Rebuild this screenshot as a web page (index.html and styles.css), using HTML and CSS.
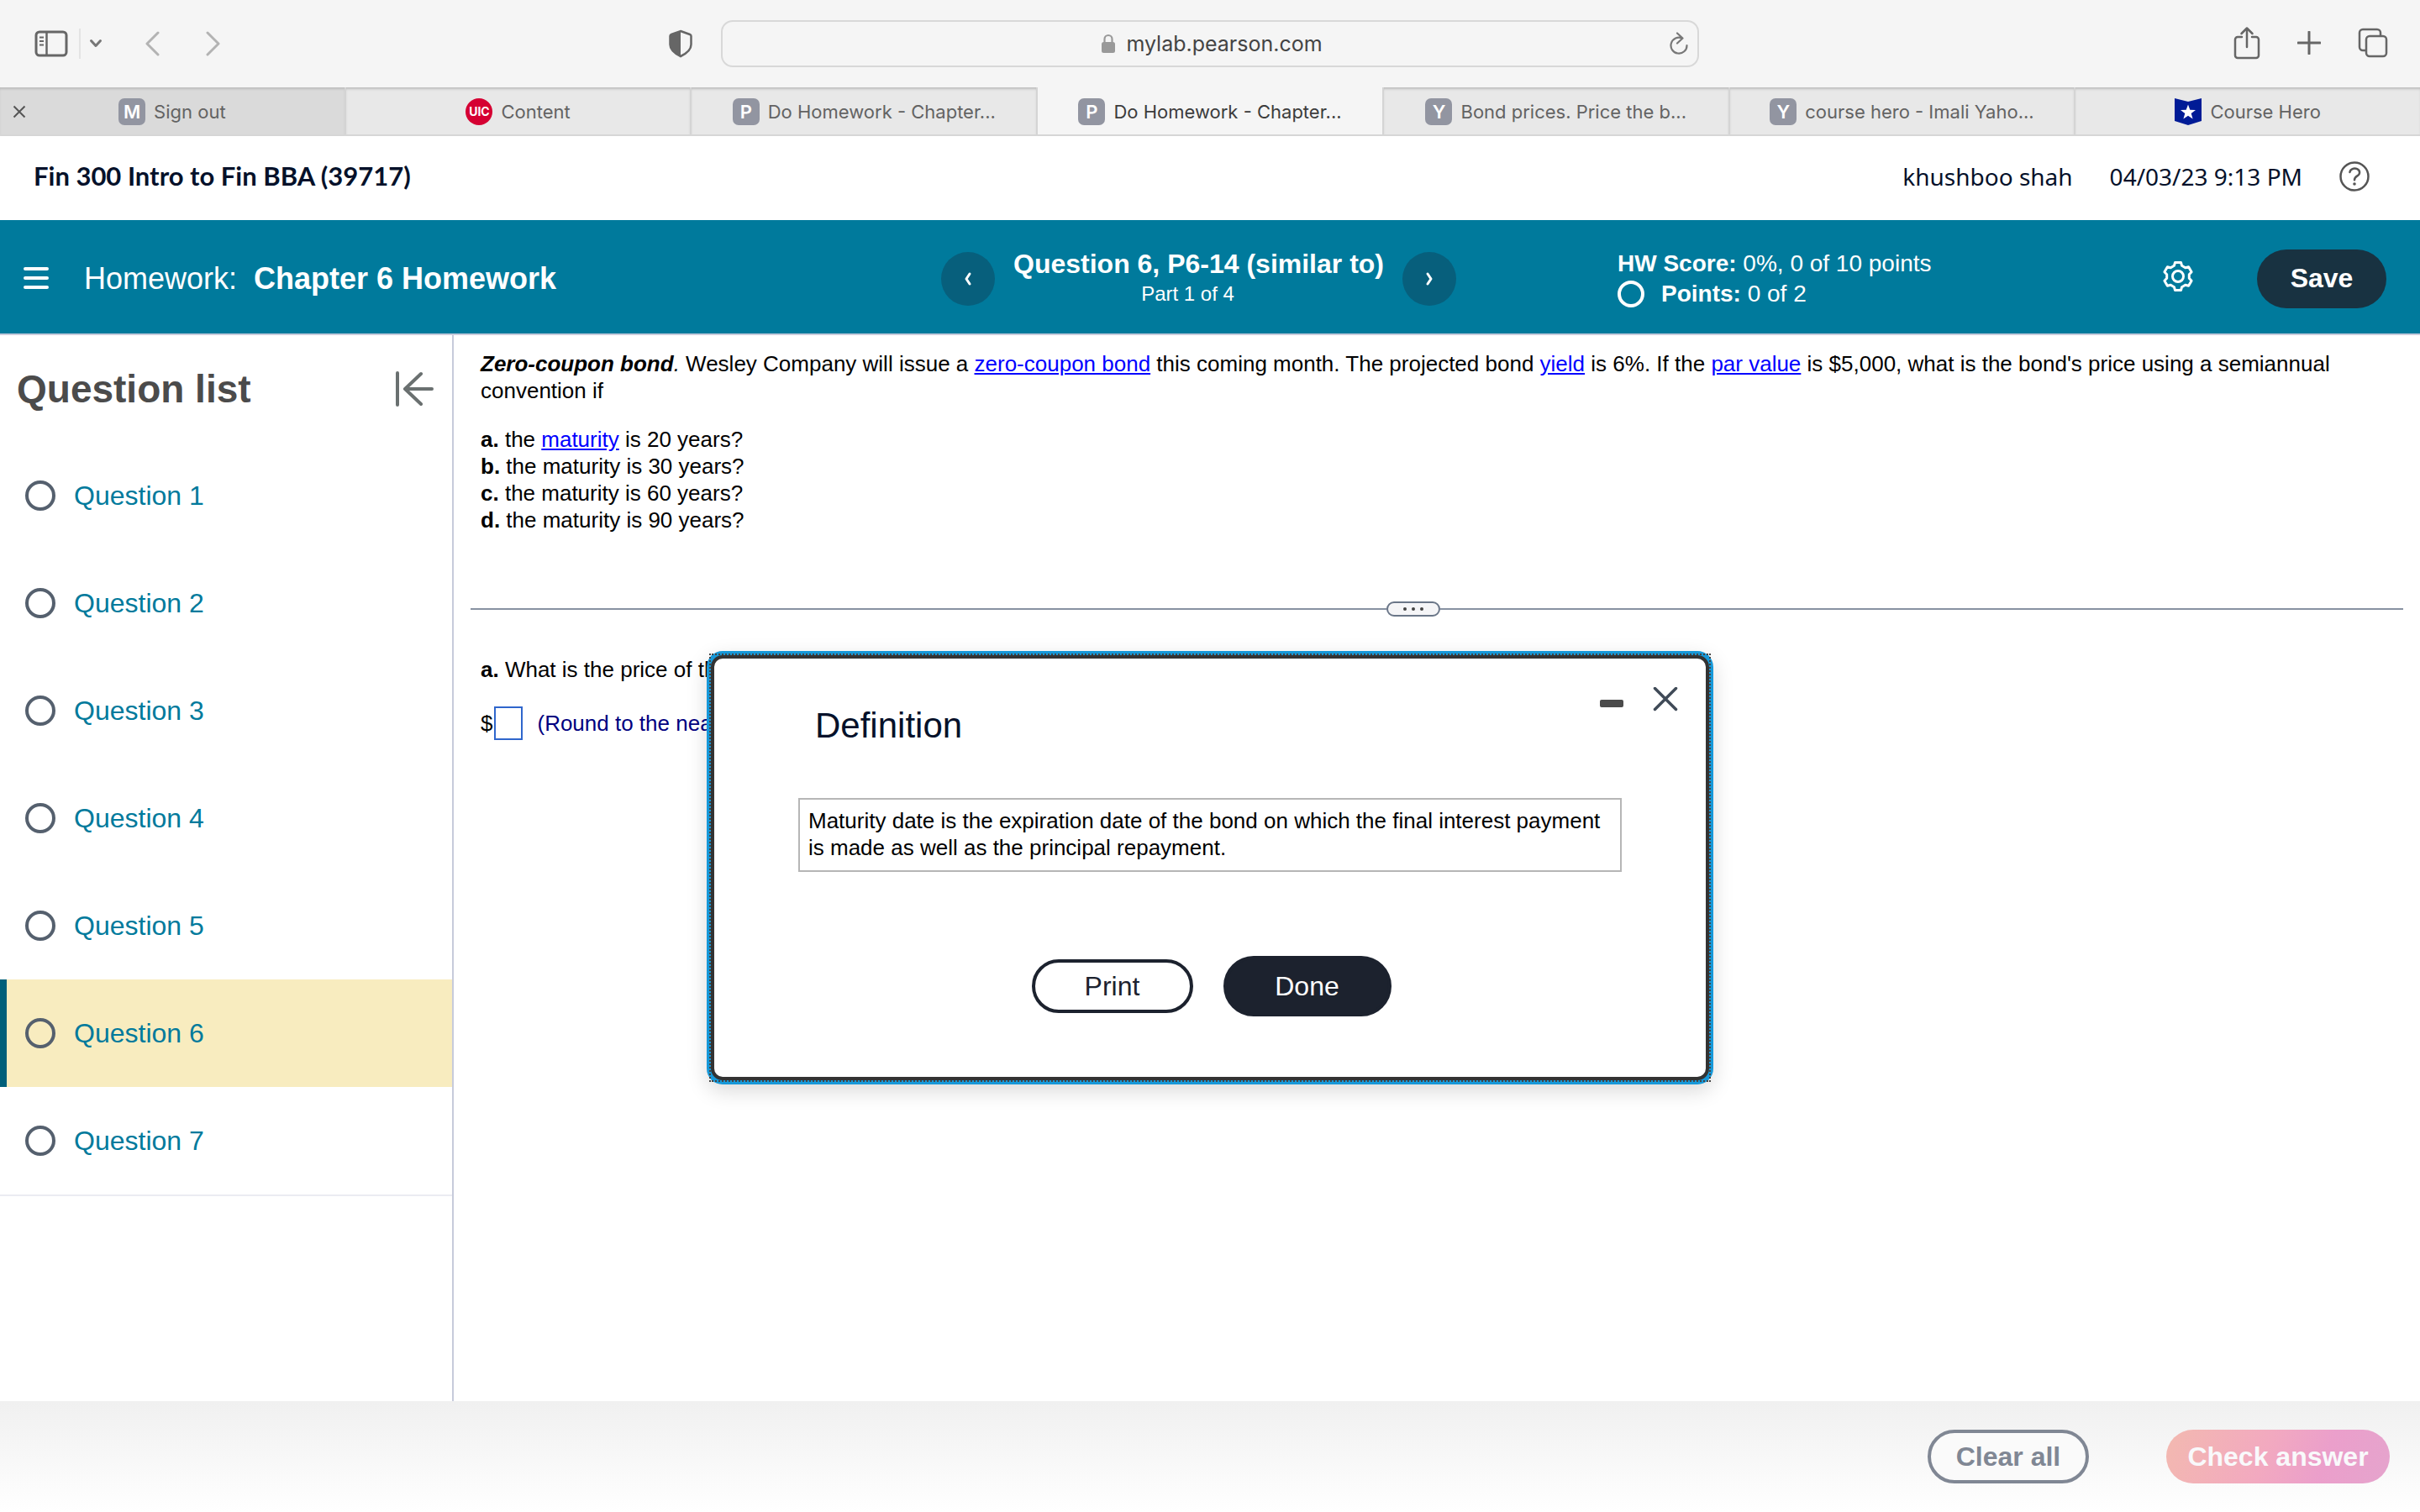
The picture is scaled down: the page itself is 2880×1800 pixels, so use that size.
FILE: index.html
```html
<!DOCTYPE html>
<html lang="en">
<head>
<meta charset="utf-8">
<title>Do Homework - Chapter 6 Homework</title>
<link rel="stylesheet" href="styles.css">
</head>
<body>
<div class="toolbar">
  <div class="tools tools-left">
    <button class="icon-btn" aria-label="Show sidebar"><svg width="40" height="32" viewBox="0 0 40 32"><rect x="2" y="2" width="36" height="28" rx="4" fill="none" stroke="#666" stroke-width="3"/><path d="M14.500 2v28" stroke="#666" stroke-width="2.500"/><path d="M6 8.500h5M6 13h5M6 17.500h5" stroke="#666" stroke-width="2"/></svg></button>
    <span class="tool-sep"></span>
    <button class="icon-btn chevron" aria-label="Tab groups"><svg width="16" height="12" viewBox="0 0 16 12"><path d="M2.500 2.500L8 8.500l5.500-6" fill="none" stroke="#777" stroke-width="3" stroke-linecap="round" stroke-linejoin="round"/></svg></button>
    <button class="icon-btn back" aria-label="Back"><svg width="20" height="30" viewBox="0 0 20 30"><path d="M16 2L3 15l13 13" fill="none" stroke="#b3b3b3" stroke-width="3" stroke-linecap="round" stroke-linejoin="round"/></svg></button>
    <button class="icon-btn forward" aria-label="Forward"><svg width="20" height="30" viewBox="0 0 20 30"><path d="M3 2l13 13L3 28" fill="none" stroke="#b3b3b3" stroke-width="3" stroke-linecap="round" stroke-linejoin="round"/></svg></button>
    <button class="icon-btn shield" aria-label="Privacy report"><svg width="28" height="34" viewBox="0 0 28 34"><path d="M14 2l11 4q1.500.6 1.500 2v10q0 8-12.500 14Q1.500 26 1.500 18V8q0-1.400 1.500-2z" fill="none" stroke="#666" stroke-width="2.500"/><path d="M14 1.500L3 6q-1.500.6-1.500 2v10q0 8 12.500 14.500z" fill="#666"/></svg></button>
  </div>
  <div class="address">
    <svg class="lock" width="18" height="24" viewBox="0 0 18 24"><path d="M4.500 11V6.500a4.500 4.500 0 0 1 9 0V11" fill="none" stroke="#999" stroke-width="2.200"/><rect x="1" y="10" width="16" height="13" rx="2.500" fill="#999"/></svg>
    <span>mylab.pearson.com</span>
    <button class="icon-btn reload" aria-label="Reload"><svg width="24" height="28" viewBox="0 0 24 28"><path d="M16 7.500A9.500 9.500 0 1 0 21.500 16M10 1.500l6.500 6-6.500 6" fill="none" stroke="#777" stroke-width="2.200" stroke-linecap="round" stroke-linejoin="round"/></svg></button>
  </div>
  <div class="tools tools-right">
    <button class="icon-btn" aria-label="Share"><svg width="32" height="40" viewBox="0 0 32 40"><path d="M10 13H5a3 3 0 0 0-3 3v19a3 3 0 0 0 3 3h22a3 3 0 0 0 3-3V16a3 3 0 0 0-3-3h-5M16 25V3M9.500 9L16 2.500 22.500 9" fill="none" stroke="#666" stroke-width="2.500" stroke-linecap="round" stroke-linejoin="round"/></svg></button>
    <button class="icon-btn" aria-label="New tab"><svg width="28" height="28" viewBox="0 0 28 28"><path d="M14 1v26M1 14h26" stroke="#666" stroke-width="3" stroke-linecap="round"/></svg></button>
    <button class="icon-btn" aria-label="Tab overview"><svg width="36" height="36" viewBox="0 0 36 36"><rect x="10" y="10" width="24" height="24" rx="4" fill="none" stroke="#666" stroke-width="2.500"/><path d="M10 27H6a4 4 0 0 1-4-4V6a4 4 0 0 1 4-4h17a4 4 0 0 1 4 4v4" fill="none" stroke="#666" stroke-width="2.500"/></svg></button>
  </div>
</div>

<nav class="tabs" aria-label="Open tabs">
  <div class="tab tab-hover"><button class="icon-btn tab-close" aria-label="Close tab"><svg width="16" height="16" viewBox="0 0 16 16"><path d="M1.500 1.500l13 13M14.500 1.500l-13 13" stroke="#555" stroke-width="2"/></svg></button><span class="fav">M</span><span>Sign out</span></div>
  <div class="tab"><span class="fav fav-uic">UIC</span><span>Content</span></div>
  <div class="tab"><span class="fav">P</span><span>Do Homework - Chapter...</span></div>
  <div class="tab tab-current"><span class="fav">P</span><span>Do Homework - Chapter...</span></div>
  <div class="tab"><span class="fav">Y</span><span>Bond prices. Price the b...</span></div>
  <div class="tab"><span class="fav">Y</span><span>course hero - Imali Yaho...</span></div>
  <div class="tab"><svg width="32" height="32" viewBox="0 0 32 32"><path d="M0 0l16 4 16-4v27l-16 5-16-5z" fill="#001b96"/><path d="M16 7.500l2.300 6.300 6.700.2-5.300 4.100 1.900 6.400-5.600-3.800-5.600 3.800 1.900-6.400L7 14l6.700-.2z" fill="#fff"/></svg><span>Course Hero</span></div>
</nav>

<header class="course">
  <h1 class="course-name">Fin 300 Intro to Fin BBA (39717)</h1>
  <div class="course-user"><span>khushboo shah</span><span>04/03/23 9:13 PM</span>
    <button class="icon-btn" aria-label="Help"><svg width="36" height="36" viewBox="0 0 36 36"><circle cx="18" cy="18" r="16.500" fill="none" stroke="#555" stroke-width="2.500"/><path d="M12.500 13a5.800 4.800 0 1 1 9 4.300c-2 1.300-3.500 2.200-3.500 4.900" fill="none" stroke="#555" stroke-width="2.500" stroke-linecap="round"/><circle cx="18" cy="27" r="1.800" fill="#555"/></svg></button>
  </div>
</header>

<div class="banner">
  <div class="banner-title">
    <button class="icon-btn" aria-label="Menu"><svg width="30" height="28" viewBox="0 0 30 28"><path d="M2 2h26M2 13h26M2 24h26" stroke="#fff" stroke-width="4" stroke-linecap="round"/></svg></button>
    <p class="hw-name">Homework:<b>Chapter 6 Homework</b></p>
  </div>
  <div class="pager">
    <button class="round" aria-label="Previous question"><svg width="12" height="18" viewBox="0 0 12 18"><path d="M8 3L4 9l4 6" fill="none" stroke="#fff" stroke-width="3" stroke-linecap="round" stroke-linejoin="round"/></svg></button>
    <div class="pager-text"><h2 class="pager-title">Question 6, P6-14 (similar to)</h2><p class="pager-part">Part 1 of 4</p></div>
    <button class="round" aria-label="Next question"><svg width="12" height="18" viewBox="0 0 12 18"><path d="M4 3l4 6-4 6" fill="none" stroke="#fff" stroke-width="3" stroke-linecap="round" stroke-linejoin="round"/></svg></button>
  </div>
  <div class="score">
    <p><b>HW Score:</b> 0%, 0 of 10 points</p>
    <p class="points"><span class="ring"></span><span><b>Points:</b> 0 of 2</span></p>
  </div>
  <div class="banner-actions">
    <button class="icon-btn settings" aria-label="Settings"><svg width="36" height="36" viewBox="-18 -18 36 36" fill="none" stroke="#fff" stroke-width="3" stroke-linejoin="round"><circle r="6.500"/><path d="M-3.500-16.500L3.500-16.500 4.600-12.700 8.700-10.300 12.600-11.300 16.100-5.200 13.300-2.300 13.300 2.300 16.100 5.200 12.600 11.300 8.700 10.300 4.600 12.700 3.500 16.500-3.500 16.500-4.600 12.700-8.700 10.300-12.600 11.300-16.100 5.200-13.300 2.300-13.300-2.300-16.100-5.200-12.600-11.300-8.700-10.300-4.600-12.700z"/></svg></button>
    <button class="save">Save</button>
  </div>
</div>

<div class="workspace">
  <aside class="sidebar">
    <div class="sidebar-head">
      <h2 class="sidebar-title">Question list</h2>
      <button class="icon-btn" aria-label="Collapse question list"><svg width="46" height="42" viewBox="0 0 46 42"><path d="M3 2v38M44 21H12M31 3L12 21l19 18" fill="none" stroke="#6a7070" stroke-width="4" stroke-linecap="round" stroke-linejoin="round"/></svg></button>
    </div>
    <ul class="questions">
      <li><a class="question" href="#q1"><span class="ring"></span>Question 1</a></li>
      <li><a class="question" href="#q2"><span class="ring"></span>Question 2</a></li>
      <li><a class="question" href="#q3"><span class="ring"></span>Question 3</a></li>
      <li><a class="question" href="#q4"><span class="ring"></span>Question 4</a></li>
      <li><a class="question" href="#q5"><span class="ring"></span>Question 5</a></li>
      <li><a class="question question-current" href="#q6"><span class="ring"></span>Question 6</a></li>
      <li><a class="question" href="#q7"><span class="ring"></span>Question 7</a></li>
    </ul>
  </aside>
  <main class="problem">
    <div class="statement">
      <p><b><i>Zero-coupon bond</i></b><i>.</i> Wesley Company will issue a <a href="#zcb">zero-coupon bond</a> this coming month. The projected bond <a href="#yield">yield</a> is 6%. If the <a href="#par">par value</a> is $5,000, what is the bond's price using a semiannual convention if</p>
      <p><b>a.</b> the <a href="#maturity">maturity</a> is 20 years?<br><b>b.</b> the maturity is 30 years?<br><b>c.</b> the maturity is 60 years?<br><b>d.</b> the maturity is 90 years?</p>
    </div>
    <div class="splitter"><button class="grip" aria-label="Resize panels"><span></span><span></span><span></span></button></div>
    <div class="response">
      <p><b>a.</b> What is the price of the bond?</p>
      <div class="answer"><label for="price">$</label><input id="price" class="answer-box" type="text"><span class="hint">(Round to the nearest cent.)</span></div>
    </div>
  </main>
</div>

<footer class="actions">
  <button class="pill clear">Clear all</button>
  <button class="pill check">Check answer</button>
</footer>

<dialog class="modal" open aria-labelledby="modal-title">
  <div class="modal-head">
    <h2 id="modal-title" class="modal-title">Definition</h2>
    <div class="modal-controls">
      <button class="icon-btn" aria-label="Minimize"><svg width="28" height="30" viewBox="0 0 28 30"><rect x="0" y="15" width="28" height="9" rx="2" fill="#4b4b4b"/></svg></button>
      <button class="icon-btn" aria-label="Close"><svg width="30" height="30" viewBox="0 0 30 30"><path d="M2.500 1.500l25 25M27.500 1.500l-25 25" stroke="#3f4a57" stroke-width="3.500" stroke-linecap="round"/></svg></button>
    </div>
  </div>
  <p class="definition">Maturity date is the expiration date of the bond on which the final interest payment is made as well as the principal repayment.</p>
  <div class="modal-actions">
    <button class="modal-btn print">Print</button>
    <button class="modal-btn done">Done</button>
  </div>
</dialog>
</body>
</html>
```
FILE: styles.css
```css
* { box-sizing: border-box; }
body {
  margin: 0;
  min-height: 100vh;
  display: flex;
  flex-direction: column;
  background: #fff;
  color: #000;
  font: 26px/32px "Liberation Sans", Arial, sans-serif;
}
h1, h2, p, ul { margin: 0; padding: 0; }
ul { list-style: none; }
button { font-family: inherit; cursor: pointer; }
svg { display: block; flex: none; }
.icon-btn { display: flex; padding: 0; border: 0; background: none; }

/* Browser toolbar */
.toolbar {
  display: grid;
  grid-template-columns: 1fr 1164px 1fr;
  align-items: center;
  height: 104px;
  background: #f5f5f5;
  font-family: Inter, sans-serif;
}
.tools { display: flex; align-items: center; }
.tools-left { padding: 0 34px 0 41px; }
.tool-sep { width: 2px; height: 36px; margin: 0 10px 0 13px; background: #e3e3e3; }
.back { margin-left: 50px; }
.forward { margin-left: 52px; }
.shield { margin-left: auto; }
.tools-right { justify-content: flex-end; gap: 44px; padding: 0 38px 3px 0; }
.address {
  position: relative;
  display: flex;
  align-items: center;
  justify-content: center;
  gap: 12px;
  height: 56px;
  padding-left: 4px;
  border: 2px solid #d8d8d8;
  border-radius: 14px;
  color: #444;
  font-size: 25px;
}
.reload { position: absolute; right: 10px; }

/* Tab strip */
.tabs {
  display: flex;
  height: 58px;
  border-bottom: 2px solid #d6d6d6;
  font: 22px/28px Inter, sans-serif;
  color: #636363;
}
.tab {
  position: relative;
  flex: 1;
  display: flex;
  align-items: center;
  justify-content: center;
  gap: 10px;
  padding-top: 2px;
  border-right: 2px solid #d4d4d4;
  background: #e8e8e8;
  box-shadow: inset 0 3px 3px -1px #bcbcbc;
  white-space: nowrap;
}
.tab:last-child { border-right: 0; }
.tab-hover { background: #dadada; }
.tab-current { background: #f5f5f5; color: #3c3c3c; box-shadow: none; }
.tab-close { position: absolute; left: 15px; }
.fav {
  width: 32px;
  height: 32px;
  border-radius: 7px;
  background: #9295a1;
  color: #fff;
  font-weight: 600;
  line-height: 32px;
  text-align: center;
}
.fav-uic { border-radius: 50%; background: #d50032; font-size: 14px; font-weight: 700; }

/* Course header */
.course {
  display: flex;
  align-items: center;
  justify-content: space-between;
  height: 100px;
  padding: 0 60px 4px 40px;
  color: #05112a;
}
.course-name { padding-bottom: 2px; font: 700 31px/40px Lato, sans-serif; }
.course-user { display: flex; align-items: center; gap: 44px; font: 28px/40px "Noto Sans", sans-serif; }

/* Homework banner */
.banner {
  display: flex;
  align-items: center;
  height: 137px;
  padding: 4px 40px 0 28px;
  border-bottom: 2px solid #c7cbdb;
  background: #007a9c;
  color: #fff;
}
.banner-title { display: flex; align-items: center; gap: 42px; width: 1092px; }
.hw-name { display: flex; gap: 20px; font-size: 36px; line-height: 40px; }
.pager { display: flex; align-items: center; gap: 22px; }
.round {
  display: flex;
  align-items: center;
  justify-content: center;
  width: 64px;
  height: 64px;
  padding: 0;
  border: 0;
  border-radius: 50%;
  background: #075f7c;
}
.pager-text { padding-bottom: 4px; text-align: center; }
.pager-title { font-size: 32px; line-height: 40px; }
.pager-part { padding-right: 26px; font-size: 24px; line-height: 32px; }
.score { margin-left: 192px; font-size: 28px; line-height: 36px; }
.points { display: flex; align-items: center; gap: 20px; }
.ring { flex: none; width: 36px; height: 36px; border: 4px solid #55606e; border-radius: 50%; }
.score .ring { width: 32px; height: 32px; border-color: #fff; }
.banner-actions { display: flex; align-items: center; gap: 76px; margin-left: auto; }
.settings { padding-bottom: 6px; }
.save {
  width: 154px;
  height: 70px;
  border: 0;
  border-radius: 35px;
  background: #183241;
  color: #fff;
  font-size: 32px;
  font-weight: 700;
}

/* Question list */
.workspace { flex: 1; display: flex; }
.sidebar { flex: none; width: 540px; border-right: 2px solid #c7cbdb; }
.sidebar-head {
  display: flex;
  align-items: center;
  justify-content: space-between;
  height: 127px;
  padding: 0 22px 0 20px;
}
.sidebar-title { color: #4b4b4b; font-size: 46px; line-height: 56px; }
.questions { border-bottom: 2px solid #ebecf2; }
.question {
  display: flex;
  align-items: center;
  gap: 22px;
  height: 128px;
  padding-left: 30px;
  color: #007a9c;
  font-size: 32px;
  text-decoration: none;
}
.question-current { padding-left: 22px; border-left: 8px solid #005f7a; background: #f8ecbf; }

/* Problem */
.problem { flex: 1; padding: 18px 20px 0; }
.statement { display: flex; flex-direction: column; gap: 26px; padding: 0 12px; }
.statement a { color: #00f; }
.splitter {
  display: flex;
  align-items: center;
  margin: 81px 0 47px;
}
.splitter::before, .splitter::after { content: ""; flex: 1; height: 2px; background: #8792a2; }
.splitter::after { flex: 1146; }
.splitter::before { flex: 1090; }
.grip {
  display: flex;
  align-items: center;
  justify-content: center;
  gap: 6px;
  width: 64px;
  height: 18px;
  padding: 0;
  border: 2px solid #6a7688;
  border-radius: 9px;
  background: #f5f5f7;
}
.grip span { width: 4px; height: 4px; border-radius: 50%; background: #444; }
.response { display: flex; flex-direction: column; gap: 28px; padding: 0 12px; }
.answer { display: flex; align-items: center; }
.answer-box { width: 34px; height: 40px; margin: 0 17px 0 2px; padding: 0; border: 2px solid #2f66cc; }
.hint { color: #000080; }

/* Footer */
.actions {
  display: flex;
  justify-content: flex-end;
  gap: 92px;
  height: 132px;
  padding: 34px 36px 0;
  background: linear-gradient(#f0f0f0, #fff);
}
.pill { height: 64px; border: 0; border-radius: 32px; font-size: 32px; font-weight: 700; }
.clear { width: 192px; padding: 0; border: 4px solid #808794; background: #fafafa; color: #808794; }
.check { width: 266px; padding: 0; background: linear-gradient(110deg, #f3b9b0, #f2a9c0 45%, #eb9fcb 70%, #e5a4cd); color: #f9f9fb; }

/* Definition dialog */
.modal {
  position: absolute;
  inset: 780px 0 auto;
  width: 1188px;
  margin: 0 auto;
  padding: 34px 33px 72px 100px;
  border: 4px solid #333;
  border-radius: 14px;
  background: #fff;
  color: #000;
  box-shadow: 0 0 0 5px #1798d8, 0 8px 24px 5px rgba(0, 0, 0, .15);
}
.modal::after {
  content: "";
  position: absolute;
  inset: -6px;
  border: 2px dotted #444;
  pointer-events: none;
}
.modal-head { display: flex; justify-content: space-between; height: 132px; }
.modal-title { padding: 22px 0 0 20px; color: #05112a; font-size: 42px; font-weight: 400; line-height: 48px; }
.modal-controls { display: flex; align-items: flex-start; gap: 35px; }
.definition { width: 980px; height: 88px; padding: 9px 10px; border: 2px solid #b6b6b6; }
.modal-actions {
  display: flex;
  align-items: center;
  justify-content: center;
  gap: 36px;
  padding: 100px 64px 0 0;
}
.modal-btn { border: 4px solid #1c222e; border-radius: 36px; font-size: 32px; }
.print { width: 192px; height: 64px; background: #fff; color: #1c222e; }
.done { width: 200px; height: 72px; background: #1c222e; color: #fff; }
```
